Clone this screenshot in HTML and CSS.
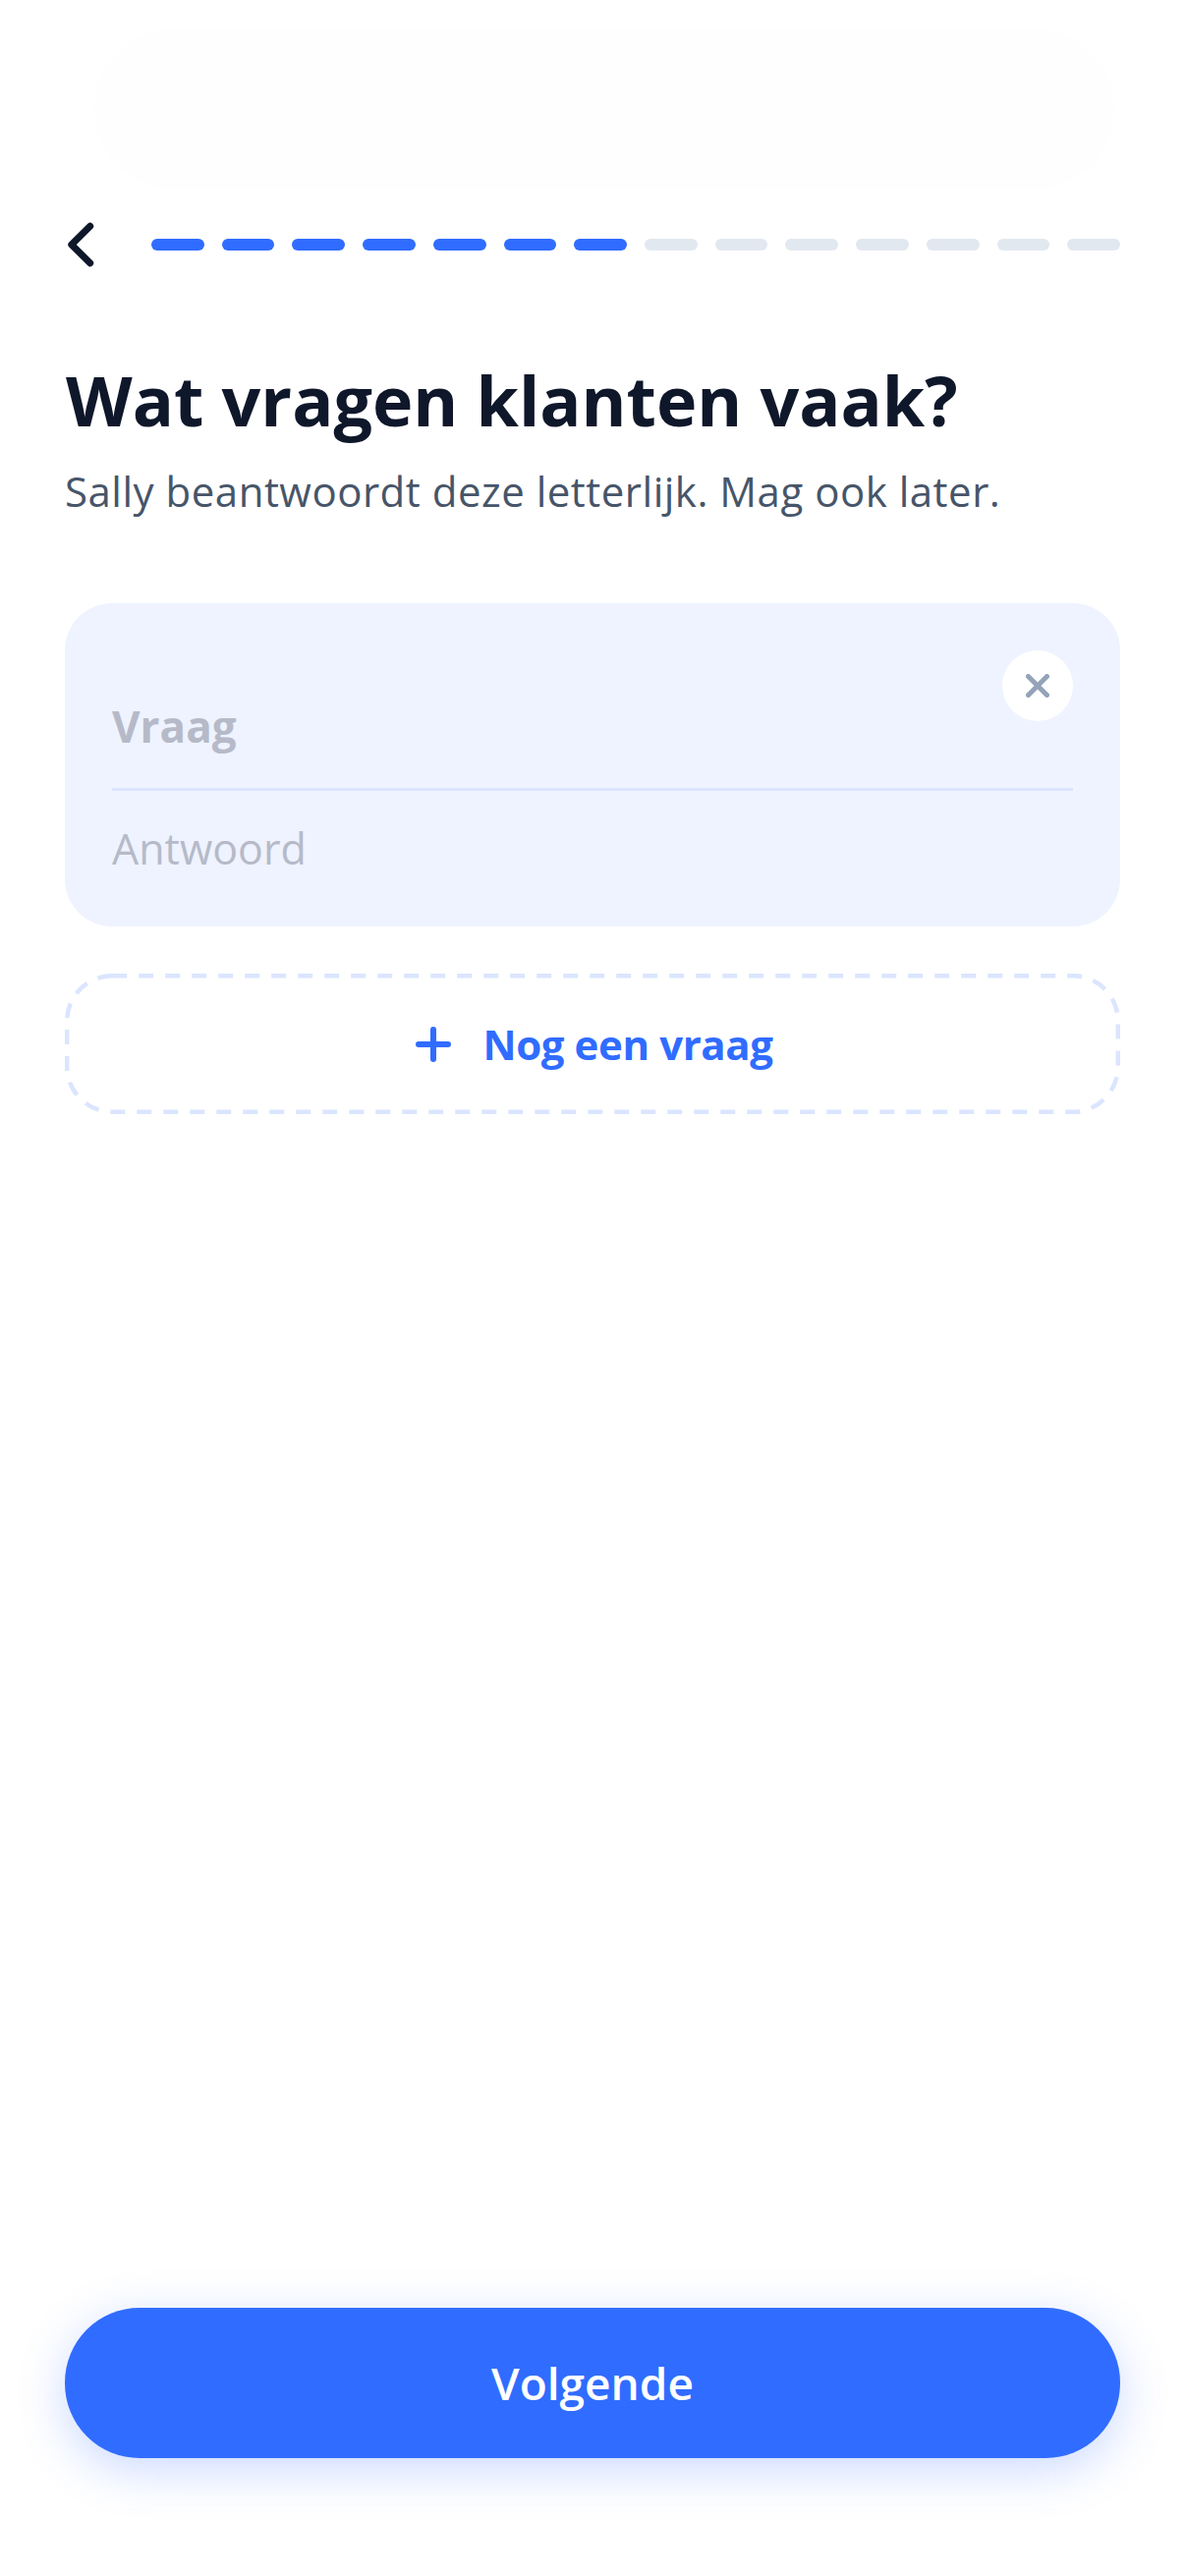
FILE: index.html
```html
<!DOCTYPE html>
<html lang="nl">

<head>
    <meta charset="UTF-8">
    <meta name="viewport" content="width=device-width, initial-scale=1.0">
    <title>Veelgestelde vragen</title>
    <link rel="stylesheet" href="styles.css">
</head>

<body>
    <div class="screen">
        <div class="status-ghost"></div>

        <div class="top-row">
            <button class="back-btn" aria-label="Terug">
                <svg width="30" height="48" viewBox="0 0 30 48">
                    <path d="M25.7 5.3 L6.8 24 L25.7 42.7" fill="none" stroke="#0f172a" stroke-width="7" stroke-linecap="round" stroke-linejoin="round" />
                </svg>
            </button>
            <div class="progress">
                <span class="step done"></span>
                <span class="step done"></span>
                <span class="step done"></span>
                <span class="step done"></span>
                <span class="step done"></span>
                <span class="step done"></span>
                <span class="step done"></span>
                <span class="step"></span>
                <span class="step"></span>
                <span class="step"></span>
                <span class="step"></span>
                <span class="step"></span>
                <span class="step"></span>
                <span class="step"></span>
            </div>
        </div>

        <h1 class="title">Wat vragen klanten vaak?</h1>
        <p class="subtitle">Sally beantwoordt deze letterlijk. Mag ook later.</p>

        <div class="qa-card">
            <button class="remove-btn" aria-label="Verwijderen">
                <svg width="24" height="24" viewBox="0 0 24 24">
                    <path d="M2.5 2.5 L21.5 21.5 M21.5 2.5 L2.5 21.5" fill="none" stroke="#94a3b8" stroke-width="5" stroke-linecap="round" />
                </svg>
            </button>
            <div class="qa-question">Vraag</div>
            <div class="qa-answer">Antwoord</div>
        </div>

        <button class="add-btn">
            <svg class="add-border" width="1074" height="143" viewBox="0 0 1074 143">
                <rect x="2.2" y="2.2" width="1069.6" height="138.6" rx="46" fill="none" stroke="#dbe5ff" stroke-width="4.5" stroke-dasharray="15 12" />
            </svg>
            <svg width="36" height="36" viewBox="0 0 36 36">
                <path d="M18 3 V33 M3 18 H33" fill="none" stroke="#306cff" stroke-width="6" stroke-linecap="round" />
            </svg>
            <span>Nog een vraag</span>
        </button>

        <div class="spacer"></div>

        <button class="next-btn">Volgende</button>
    </div>
</body>

</html>
```

FILE: styles.css
```css
* {
    box-sizing: border-box;
}

html,
body {
    margin: 0;
    padding: 0;
    background: #fff;
}

body {
    font-family: "Open Sans", "Noto Sans", sans-serif;
}

button {
    font-family: inherit;
    border: none;
    padding: 0;
    cursor: pointer;
}

.screen {
    position: relative;
    width: 1206px;
    height: 2622px;
    padding: 0 66px 120px;
    display: flex;
    flex-direction: column;
}

.status-ghost {
    position: absolute;
    left: 96px;
    top: 30px;
    width: 1038px;
    height: 162px;
    border-radius: 80px;
    background: #fefefe;
}

.top-row {
    display: flex;
    align-items: center;
    gap: 57px;
    margin-top: 225px;
    height: 48px;
}

.back-btn {
    width: 31px;
    height: 48px;
    background: none;
    display: flex;
}

.progress {
    flex: 1;
    display: flex;
    gap: 18px;
}

.step {
    flex: 1;
    height: 12px;
    border-radius: 6px;
    background: #e2e8f0;
}

.step.done {
    background: #306cff;
}

.title {
    margin: 92px 0 0;
    padding-left: 1px;
    font-size: 70px;
    line-height: 84px;
    font-weight: 700;
    color: #0f172a;
}

.subtitle {
    margin: 24px 0 0;
    font-size: 42px;
    line-height: 54px;
    letter-spacing: 0.5px;
    color: #475569;
}

.qa-card {
    position: relative;
    margin-top: 87px;
    height: 329px;
    padding: 82px 48px 0;
    border-radius: 48px;
    background: #eef3ff;
}

.remove-btn {
    position: absolute;
    top: 48px;
    right: 48px;
    width: 72px;
    height: 72px;
    border-radius: 50%;
    background: #fff;
    display: flex;
    align-items: center;
    justify-content: center;
}

.qa-question {
    height: 109px;
    padding-top: 15px;
    border-bottom: 3px solid #dbe5ff;
    font-size: 44px;
    line-height: 56px;
    font-weight: 700;
    color: #b6bac8;
}

.qa-answer {
    margin-top: 31px;
    font-size: 43px;
    line-height: 56px;
    color: #b6bac8;
}

.add-btn {
    position: relative;
    margin-top: 48px;
    height: 143px;
    padding-left: 4px;
    background: #fff;
    display: flex;
    align-items: center;
    justify-content: center;
    gap: 32px;
    font-size: 42px;
    font-weight: 700;
    letter-spacing: -0.4px;
    color: #306cff;
}

.add-border {
    position: absolute;
    left: 0;
    top: 0;
}

.spacer {
    flex: 1;
}

.next-btn {
    height: 153px;
    padding-bottom: 2px;
    border-radius: 76px;
    background: #306cff;
    color: #fff;
    font-size: 46px;
    font-weight: 600;
    box-shadow: 0 12px 48px rgba(48, 108, 255, 0.25);
}
```
